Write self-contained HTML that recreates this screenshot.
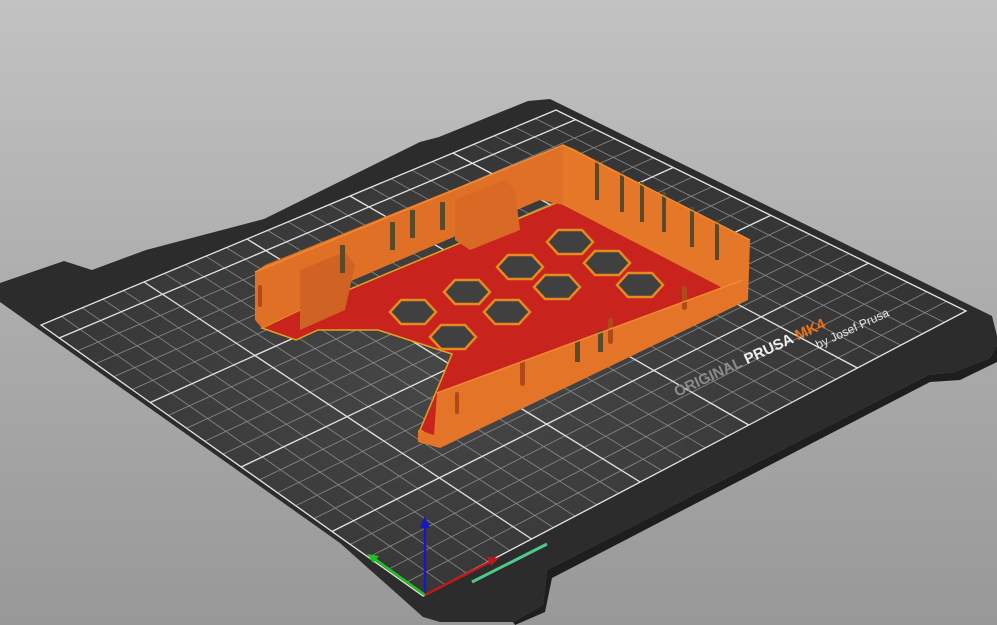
<!DOCTYPE html>
<html><head><meta charset="utf-8"><style>
html,body{margin:0;padding:0;width:997px;height:625px;overflow:hidden}
body{background:linear-gradient(#c2c2c2 0%,#b0b0b0 40%,#989898 100%)}
svg{position:absolute;left:0;top:0}
</style></head><body>
<svg width="997" height="625" viewBox="0 0 997 625" xmlns="http://www.w3.org/2000/svg">
<defs>
<radialGradient id="bg" cx="0.45" cy="0.55" r="0.6">
<stop offset="0" stop-color="#474747"/><stop offset="1" stop-color="#313131"/>
</radialGradient>
</defs>
<!-- bed top -->
<polygon fill="#2c2c2c" points="0,283 64,261 92,270 146,250 264,219 420,142 439,137 528,101 550,99 992,316 997,336 997,345 990,358 954,372 928,375 547,570 543,605 513,622 440,622 423,617 340,543 0,302"/>
<polygon fill="#1e1e1e" points="990,358 954,372 928,375 547,570 543,605 513,622 515,625 545,612 552,578 930,382 960,380 997,362 997,345"/>
<!-- printable area -->
<polygon fill="url(#bg)" points="423,596 966,311 556,110 41,325"/>
<g stroke="#8a8a8a" stroke-width="0.8">
<line x1="444.7" y1="584.6" x2="61.6" y2="316.4"/><line x1="466.4" y1="573.2" x2="82.2" y2="307.8"/><line x1="488.2" y1="561.8" x2="102.8" y2="299.2"/><line x1="509.9" y1="550.4" x2="123.4" y2="290.6"/>
<line x1="553.3" y1="527.6" x2="164.6" y2="273.4"/><line x1="575" y1="516.2" x2="185.2" y2="264.8"/><line x1="596.8" y1="504.8" x2="205.8" y2="256.2"/><line x1="618.5" y1="493.4" x2="226.4" y2="247.6"/>
<line x1="661.9" y1="470.6" x2="267.6" y2="230.4"/><line x1="683.6" y1="459.2" x2="288.2" y2="221.8"/><line x1="705.4" y1="447.8" x2="308.8" y2="213.2"/><line x1="727.1" y1="436.4" x2="329.4" y2="204.6"/>
<line x1="770.5" y1="413.6" x2="370.6" y2="187.4"/><line x1="792.2" y1="402.2" x2="391.2" y2="178.8"/><line x1="814" y1="390.8" x2="411.8" y2="170.2"/><line x1="835.7" y1="379.4" x2="432.4" y2="161.6"/>
<line x1="879.1" y1="356.6" x2="473.6" y2="144.4"/><line x1="900.8" y1="345.2" x2="494.2" y2="135.8"/><line x1="922.6" y1="333.8" x2="514.8" y2="127.2"/><line x1="944.3" y1="322.4" x2="535.4" y2="118.6"/>
<line x1="404.8" y1="583.1" x2="946.5" y2="301.4"/><line x1="386.6" y1="570.2" x2="927" y2="291.9"/><line x1="368.4" y1="557.3" x2="907.4" y2="282.3"/><line x1="350.2" y1="544.4" x2="887.9" y2="272.7"/>
<line x1="313.9" y1="518.6" x2="848.9" y2="253.6"/><line x1="295.7" y1="505.7" x2="829.4" y2="244"/><line x1="277.5" y1="492.8" x2="809.8" y2="234.4"/><line x1="259.3" y1="479.9" x2="790.3" y2="224.9"/>
<line x1="222.9" y1="454.1" x2="751.3" y2="205.7"/><line x1="204.7" y1="441.2" x2="731.8" y2="196.2"/><line x1="186.5" y1="428.3" x2="712.2" y2="186.6"/><line x1="168.3" y1="415.4" x2="692.7" y2="177"/>
<line x1="132" y1="389.6" x2="653.7" y2="157.9"/><line x1="113.8" y1="376.7" x2="634.2" y2="148.3"/><line x1="95.6" y1="363.8" x2="614.6" y2="138.7"/><line x1="77.4" y1="350.9" x2="595.1" y2="129.2"/>
</g>
<g stroke="#e4e4e4" stroke-width="1.3" fill="none">
<polygon points="423,596 966,311 556,110 41,325"/>
<line x1="531.6" y1="539" x2="144" y2="282"/><line x1="640.2" y1="482" x2="247" y2="239"/><line x1="748.8" y1="425" x2="350" y2="196"/><line x1="857.4" y1="368" x2="453" y2="153"/>
<line x1="332" y1="531.5" x2="868.4" y2="263.2"/><line x1="241.1" y1="467" x2="770.8" y2="215.3"/><line x1="150.2" y1="402.5" x2="673.2" y2="167.5"/><line x1="59.2" y1="338" x2="575.6" y2="119.6"/>
</g>
<!-- text -->
<g transform="translate(677,397) rotate(-25)" font-family="Liberation Sans, sans-serif" font-weight="bold">
<text x="0" y="0" font-size="15" fill="#8a8a8a">ORIGINAL <tspan fill="#f0f0f0">PRUSA</tspan> <tspan fill="#e8731f">MK4</tspan></text>
</g>
<g transform="translate(818,349) rotate(-25)" font-family="Liberation Sans, sans-serif">
<text x="0" y="0" font-size="12" fill="#e6e6e6">by Josef Prusa</text>
</g>
<!-- object -->
<polygon fill="#c8231d" stroke="#e2a21f" stroke-width="1.5" points="262,328 296,340 318,330 378,330 452,354 420,430 434,438 560,385 745,285 745,270 563,200 300,310"/>
<g fill="#404040" stroke="#e58a1f" stroke-width="2.5">
<polygon points="547,242 558,230 582,230 593,242 582,254 558,254"/>
<polygon points="497,267 508,255 532,255 543,267 532,279 508,279"/>
<polygon points="584,263 595,251 619,251 630,263 619,275 595,275"/>
<polygon points="444,292 455,280 479,280 490,292 479,304 455,304"/>
<polygon points="534,287 545,275 569,275 580,287 569,299 545,299"/>
<polygon points="390,312 401,300 425,300 436,312 425,324 401,324"/>
<polygon points="484,312 495,300 519,300 530,312 519,324 495,324"/>
<polygon points="430,337 441,325 465,325 476,337 465,349 441,349"/>
<polygon points="617,285 628,273 652,273 663,285 652,297 628,297"/>
</g>
<!-- back-left wall -->
<polygon fill="#e07026" points="255,272 265,265 563,145 563,205 540,200 330,290 300,310 262,328 255,320"/>
<polygon fill="#d06224" points="300,270 345,252 355,265 345,310 300,330"/>
<polygon fill="#d96a25" points="455,200 505,180 515,190 520,230 470,250 455,240"/>
<!-- right wall -->
<polygon fill="#e57728" points="563,145 572,148 750,240 748,300 740,297 563,205"/>
<!-- front wall -->
<polygon fill="#e37428" points="437,393 743,280 748,300 440,448 418,442 418,430 434,435"/>
<g fill="#b04a18">
<rect x="258" y="285" width="4" height="22" rx="2"/>
<rect x="520" y="360" width="5" height="26" rx="2.5"/>
<rect x="608" y="318" width="5" height="26" rx="2.5"/>
<rect x="682" y="286" width="5" height="24" rx="2.5"/>
<rect x="455" y="392" width="4" height="22" rx="2"/>
</g>
<g fill="#5a4a2a">
<rect x="595" y="160" width="4" height="40"/><rect x="620" y="172" width="4" height="40"/><rect x="640" y="182" width="4" height="40"/><rect x="662" y="192" width="4" height="40"/><rect x="690" y="207" width="4" height="40"/><rect x="715" y="220" width="4" height="40"/>
<rect x="340" y="245" width="5" height="28"/><rect x="390" y="222" width="5" height="28"/><rect x="410" y="210" width="5" height="28"/><rect x="440" y="202" width="5" height="28"/>
<rect x="575" y="340" width="5" height="22"/><rect x="598" y="330" width="5" height="22"/>
</g>
<path d="M255,272 L563,145 L750,240" fill="none" stroke="#f08a30" stroke-width="1.5"/>
<path d="M437,393 L743,280" fill="none" stroke="#f08a30" stroke-width="1.5"/>
<!-- axes -->
<line x1="425" y1="595" x2="425" y2="524" stroke="#1818c0" stroke-width="2.5"/>
<polygon points="425,516 420,528 430,528" fill="#1818c0"/>
<line x1="425" y1="595" x2="372" y2="557" stroke="#20c020" stroke-width="2.5"/>
<polygon points="367,554 379,556 373,563" fill="#20c020"/>
<line x1="425" y1="595" x2="492" y2="561" stroke="#c01818" stroke-width="2.5"/>
<polygon points="499,558 487,557 491,566" fill="#c01818"/>
<line x1="472" y1="582" x2="547" y2="544" stroke="#4fc98a" stroke-width="3"/>
</svg>
</body></html>
